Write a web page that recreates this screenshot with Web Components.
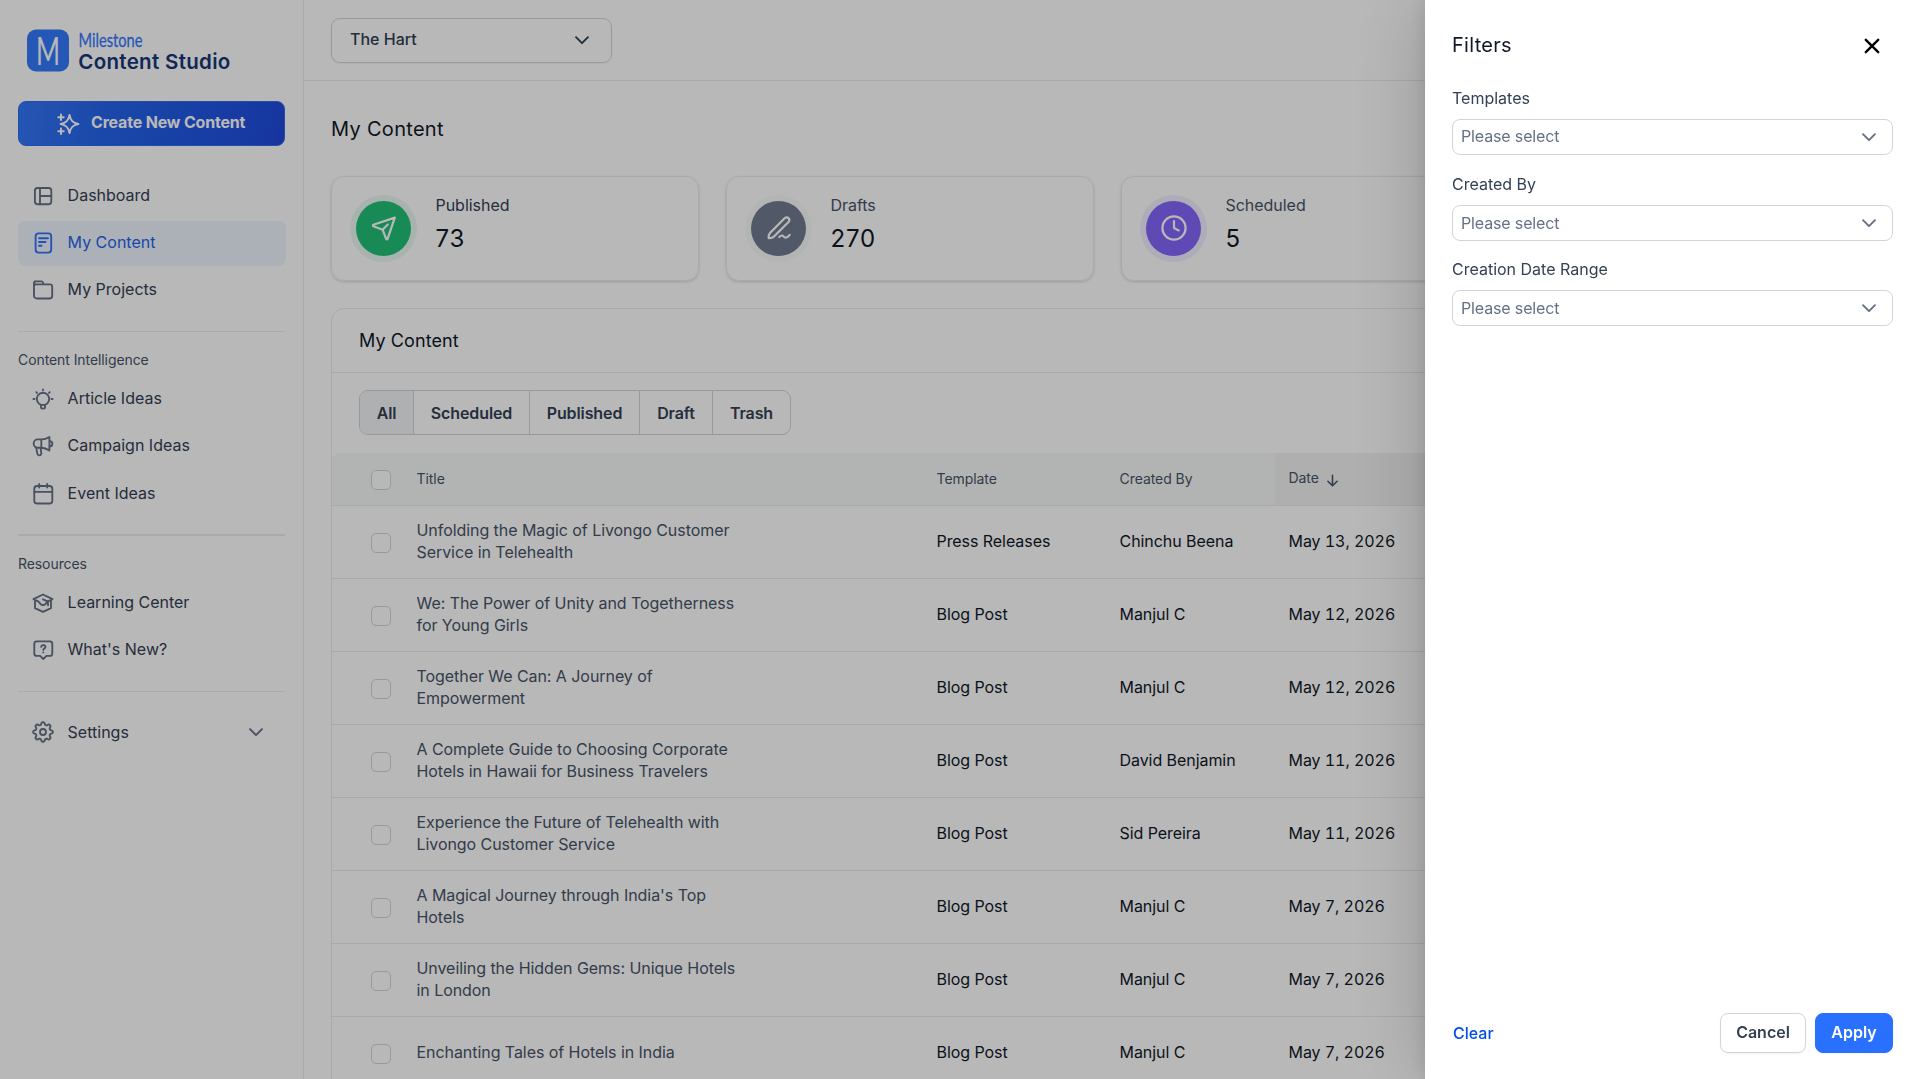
<!DOCTYPE html>
<html lang="en">
<head>
<meta charset="utf-8">
<title>Milestone Content Studio</title>
<style>
  body {
    margin: 0;
    width: 1919px;
    height: 1079px;
    overflow: hidden;
    background: #fff;
    font-family: Inter, "Liberation Sans", sans-serif;
    font-size: 16px;
    line-height: 22px;
    color: #344054;
  }
</style>
</head>
<body>
<content-studio></content-studio>

<script>
// Gear outline with eight soft teeth
function gearPath() {
  const points = [];
  for (let i = 0; i < 96; i++) {
    const a = (i / 96) * Math.PI * 2;
    const r = 8.6 + 1.2 * Math.tanh(2.2 * Math.cos(8 * a));
    points.push((12 + r * Math.cos(a)).toFixed(2) + ' ' + (12 + r * Math.sin(a)).toFixed(2));
  }
  return 'M' + points.join('L') + 'z';
}

const ICONS = {
  dashboard: '<rect x="3.9" y="4" width="16.4" height="16.2" rx="2.6"/><path d="M9 4v16.2M9 12h11.3"/>',
  content: '<rect x="4.6" y="2.4" width="15.6" height="19.2" rx="3"/><path d="M8 7.2h9M8 11h6.6M8 14.7h2.6"/>',
  folder: '<path d="M3 8.2V5a1.8 1.8 0 0 1 1.8-1.7h5.7a1.5 1.5 0 0 1 1.4 1l.8 2M3 8.2a2 2 0 0 1 2-1.9h14a2.2 2.2 0 0 1 2.2 2.2v9.2a2.8 2.8 0 0 1-2.8 2.8H5.8A2.8 2.8 0 0 1 3 17.7z"/>',
  bulb: '<path d="M10 17.8a6.2 6.2 0 1 1 4 0V20a1.6 1.6 0 0 1-1.6 1.6h-.8A1.6 1.6 0 0 1 10 20zM10 17.8h4M12 2.4v.9M2.4 12h1.1M20.5 12h1.1M5.3 5.2l.7.7M18.7 5.2l-.7.7"/>',
  megaphone: '<path d="M10.3 5.4H6.8a4.1 4.1 0 0 0 0 8.3h3.5zM10.3 5.4c3 0 5.5-.8 8.1-2.5v13.6c-2.6-1.8-5.1-2.8-8.1-2.8M18.4 6.9c4 .5 4 5.3 0 5.8M5.2 13.7l1.1 5.9a2 2 0 0 0 2 1.7c1.3 0 2.2-1 2-2.3l-.7-5.1"/>',
  calendar: '<rect x="3.3" y="4" width="18" height="17.5" rx="2.8"/><path d="M3.3 9.9h18M8.2 2v3.6M16.2 2v3.6"/>',
  learning: '<path d="M2.5 8.2 12 3.5l9.5 4.7M4 8.4v8.8l8 3.7 8-3.7V8.4M2.5 8.2l5 2.5 2.2 2.5c1.5 1 3.2 1 4.6 0l2.2-2.5 5-2.5M12 8.3l5 2.2v3.8"/>',
  question: '<path d="M5.8 3.4h13A2.5 2.5 0 0 1 21.3 5.9v9.5a2.5 2.5 0 0 1-2.5 2.5h-3.3L12.3 21l-3.2-3.1H5.8a2.5 2.5 0 0 1-2.5-2.5V5.9a2.5 2.5 0 0 1 2.5-2.5zM10.2 8.8c.2-2.3 4.2-2.2 4.2.1 0 1.5-2.1 1.6-2.1 3M12.3 14.3v.1"/>',
  gear: '<path d="' + gearPath() + '"/><circle cx="12" cy="12" r="3"/>',
  sparkles: '<path d="M12.5 3c1 5.600 3.200 8 8.900 9-5.700 1-7.900 3.400-8.900 9-1-5.600-3.200-8-8.900-9 5.700-1 7.900-3.400 8.900-9zM4 2.500v5.400M1.300 5.200h5.400M4 16.500v5.400M1.300 19.200h5.400"/>',
  send: '<path d="M22.8 1.6 1.4 8.7c-.7.3-.7 1.2 0 1.5l9.2 3.5 3.5 9.2c.3.7 1.2.7 1.5 0zM10.8 13.5l5-5"/>',
  pen: '<path d="M1.7 22.2c-.3-2.4 0-4 1.5-5.5L17.6 2.3c2.700-2.500 6.300.8 3.900 3.700L7 20.500c-1.500 1.500-3 1.900-5.300 1.700zM12.300 21c2.200-2 3.300-1.800 4.400-.4 1.300 1.600 3.700 1.300 6-1.700"/>',
  clock: '<circle cx="12" cy="12" r="11.6"/><path d="M12 5.2V12l4.7 2.4"/>',
  chevron: '<path d="M6 9.2l6 6 6-6"/>',
  close: '<path d="M5.8 5.8l12.4 12.4M18.2 5.8 5.8 18.2"/>',
  arrow: '<path d="M12 4.5v15M5.5 13l6.5 6.5 6.5-6.5"/>'
};

class StudioIcon extends HTMLElement {
  connectedCallback() {
    const size = this.getAttribute('size') || 24;
    const stroke = this.getAttribute('stroke') || 1.85;
    this.attachShadow({ mode: 'open' }).innerHTML = `
      <style>
        :host { display: block; flex: none; width: ${size}px; height: ${size}px; }
        svg { display: block; overflow: visible; }
      </style>
      <svg width="${size}" height="${size}" viewBox="0 0 24 24" fill="none" stroke="currentColor"
        stroke-width="${stroke}" stroke-linecap="round" stroke-linejoin="round">${ICONS[this.getAttribute('name')]}</svg>
    `;
  }
}

class BrandLogo extends HTMLElement {
  connectedCallback() {
    this.attachShadow({ mode: 'open' }).innerHTML = `
      <style>
        :host { display: block; height: 71px; padding-left: 27px; }
        svg { display: block; overflow: visible; }
      </style>
      <svg width="210" height="90" viewBox="0 -29 210 90">
        <rect x="0" y="0.5" width="42" height="42" rx="9" fill="#3479fe"/>
        <text x="9" y="35.5" textLength="24" lengthAdjust="spacingAndGlyphs" font-family="Lato, sans-serif" font-size="39" fill="#fff">M</text>
        <text x="51.5" y="18" textLength="64" lengthAdjust="spacingAndGlyphs" font-family="Lato, sans-serif" font-size="20" fill="#3479fe" stroke="#3479fe" stroke-width=".3">Milestone</text>
        <text x="51.3" y="40" textLength="152" font-family="Inter, sans-serif" font-size="20.5" font-weight="600" fill="#15367a">Content Studio</text>
      </svg>
    `;
  }
}

class NavItem extends HTMLElement {
  connectedCallback() {
    this.attachShadow({ mode: 'open' }).innerHTML = `
      <style>
        :host { display: flex; align-items: center; box-sizing: border-box; height: 45px; padding: 0 17px 0 13px; border-radius: 7px; color: #344054; }
        :host([active]) { background: #eff6ff; color: #2563eb; margin-right: -1px; }
        studio-icon { color: #667085; margin-right: 12.6px; position: relative; top: var(--icon-shift, 0); }
        :host([active]) studio-icon { color: #3473fa; }
        span { flex: 1; position: relative; top: var(--text-shift, -1px); }
        .more { margin-right: 0; }
      </style>
      <studio-icon name="${this.getAttribute('icon')}"></studio-icon>
      <span><slot></slot></span>
      ${this.hasAttribute('expandable') ? '<studio-icon class="more" name="chevron" stroke="1.9"></studio-icon>' : ''}
    `;
  }
}

class SideBar extends HTMLElement {
  connectedCallback() {
    this.attachShadow({ mode: 'open' }).innerHTML = `
      <style>
        :host { display: block; box-sizing: border-box; width: 304px; height: 1079px; border-right: 1px solid #eaecf0; flex: none; }
        .create { display: flex; align-items: center; box-sizing: border-box; width: 267px; height: 45px; margin: 30px 0 0 18px; padding-left: 38px; border-radius: 8px; border: 1px solid #2f6bf0; background: linear-gradient(100deg, #3577f8, #2463eb 35%, #1f4fe0 90%, #2148dc); color: #fff; font-weight: 650; }
        .create studio-icon { margin-right: 10px; }
        .create span { position: relative; top: -2px; letter-spacing: -.18px; }
        nav { display: grid; row-gap: 2px; margin: 28px 18px 0 18px; }
        .first { --text-shift: -2px; --icon-shift: -.7px; }
        .last { --icon-shift: -.5px; }
        hr { width: 267px; height: 1px; border: 0; margin: 18px 0 0 18px; background: #eaecf0; }
        h4 { margin: 18px 0 0 18px; font-size: 14px; line-height: 20px; font-weight: 400; letter-spacing: -.08px; color: #475467; }
        h4 + nav { margin-top: 6px; }
      </style>
      <brand-logo></brand-logo>
      <div class="create"><studio-icon name="sparkles" stroke="2"></studio-icon><span>Create New Content</span></div>
      <nav class="first">
        <nav-item icon="dashboard">Dashboard</nav-item>
        <nav-item icon="content" active>My Content</nav-item>
        <nav-item icon="folder">My Projects</nav-item>
      </nav>
      <hr>
      <h4>Content Intelligence</h4>
      <nav style="row-gap: 2.5px">
        <nav-item icon="bulb">Article Ideas</nav-item>
        <nav-item icon="megaphone">Campaign Ideas</nav-item>
        <nav-item icon="calendar">Event Ideas</nav-item>
      </nav>
      <hr style="height: 2px">
      <h4>Resources</h4>
      <nav>
        <nav-item icon="learning">Learning Center</nav-item>
        <nav-item icon="question">What's New?</nav-item>
      </nav>
      <hr style="margin-top: 19px">
      <nav class="last" style="margin-top: 18px">
        <nav-item icon="gear" expandable>Settings</nav-item>
      </nav>
    `;
  }
}

class TopBar extends HTMLElement {
  connectedCallback() {
    this.attachShadow({ mode: 'open' }).innerHTML = `
      <style>
        :host { display: block; box-sizing: border-box; height: 81px; padding: 18px 27px; border-bottom: 1px solid #eaecf0; }
        .picker { display: flex; align-items: center; justify-content: space-between; box-sizing: border-box; width: 281px; height: 45px; padding: 0 17px 0 18px; border: 1px solid #d0d5dd; border-radius: 9px; box-shadow: 0 1px 2px rgba(16, 24, 40, .05); font-weight: 500; }
        span { position: relative; top: -2px; }
        studio-icon { position: relative; top: -1px; }
      </style>
      <div class="picker"><span><slot></slot></span><studio-icon name="chevron" stroke="1.9"></studio-icon></div>
    `;
  }
}

class StatCard extends HTMLElement {
  connectedCallback() {
    this.attachShadow({ mode: 'open' }).innerHTML = `
      <style>
        :host { display: flex; box-sizing: border-box; width: 368px; height: 105px; padding: 24px; border: 1px solid #eaecf0; border-radius: 13px; box-shadow: 0 1px 3px rgba(16, 24, 40, .12), 0 1px 2px rgba(16, 24, 40, .05); }
        .badge { display: grid; place-items: center; width: 55px; height: 55px; border-radius: 50%; background: var(--badge); box-shadow: 0 0 0 6px var(--ring); color: #fff; margin-right: 24.5px; }
        studio-icon { margin: -1px 0 0 0; }
        .label { line-height: 20px; margin-top: -6px; letter-spacing: -.03px; color: var(--label, #475467); }
        .value { margin-top: 9px; font-size: 24px; line-height: 30px; letter-spacing: .8px; color: #101828; }
      </style>
      <div class="badge"><studio-icon name="${this.getAttribute('icon')}" stroke="2.2"></studio-icon></div>
      <div>
        <div class="label"><slot></slot></div>
        <div class="value">${this.getAttribute('value')}</div>
      </div>
    `;
  }
}

class TabGroup extends HTMLElement {
  connectedCallback() {
    const tabs = this.getAttribute('tabs').split(',');
    this.attachShadow({ mode: 'open' }).innerHTML = `
      <style>
        :host { display: flex; box-sizing: border-box; width: 432px; height: 45px; border: 1px solid #d0d5dd; border-radius: 9px; overflow: hidden; font-weight: 600; line-height: 44px; }
        div { box-sizing: border-box; text-align: center; border-right: 1px solid #d0d5dd; letter-spacing: -.1px; }
        div:first-of-type { background: #f2f4f7; }
        div:last-of-type { border-right: 0; }
      </style>
      ${tabs.map((tab, i) => `<div style="width: ${[54, 116, 110, 73, 77][i]}px">${tab}</div>`).join('')}
    `;
  }
}

class ContentTable extends HTMLElement {
  connectedCallback() {
    const rows = [
      ['Unfolding the Magic of Livongo Customer Service in Telehealth', 'Press Releases', 'Chinchu Beena', 'May 13, 2026'],
      ['We: The Power of Unity and Togetherness for Young Girls', 'Blog Post', 'Manjul C', 'May 12, 2026'],
      ['Together We Can: A Journey of Empowerment', 'Blog Post', 'Manjul C', 'May 12, 2026'],
      ['A Complete Guide to Choosing Corporate Hotels in Hawaii for Business Travelers', 'Blog Post', 'David Benjamin', 'May 11, 2026'],
      ['Experience the Future of Telehealth with Livongo Customer Service', 'Blog Post', 'Sid Pereira', 'May 11, 2026'],
      ["A Magical Journey through India's Top Hotels", 'Blog Post', 'Manjul C', 'May 7, 2026'],
      ['Unveiling the Hidden Gems: Unique Hotels in London', 'Blog Post', 'Manjul C', 'May 7, 2026'],
      ['Enchanting Tales of Hotels in India', 'Blog Post', 'Manjul C', 'May 7, 2026']
    ];
    this.attachShadow({ mode: 'open' }).innerHTML = `
      <style>
        :host { display: block; }
        .row { display: grid; grid-template-columns: 84.5px 520px 183px 155.5px 1fr; align-items: center; box-sizing: border-box; height: 73px; padding-bottom: 2px; border-bottom: 1px solid #eaecf0; color: #101828; letter-spacing: -.06px; }
        .head { height: 53px; padding-bottom: 0; background: #f7faf9; border-radius: 8px 8px 0 0; font-size: 14px; color: #475467; }
        .check { box-sizing: border-box; width: 20px; height: 20px; margin: 4px 0 0 39px; border: 1px solid #d0d5dd; border-radius: 5px; background: #fff; }
        .head .check { margin-top: 2px; }
        .title { width: 328px; color: #475467; }
        .date { padding-left: 13.5px; font-variant-numeric: tabular-nums; letter-spacing: -.05px; }
        .head .date { display: flex; align-items: center; gap: 5px; align-self: stretch; background: #f3f3f4; }
        .date span { margin-top: -3px; }
        studio-icon { margin-top: 2px; }
      </style>
      <div class="row head">
        <div class="check"></div><div>Title</div><div>Template</div><div>Created By</div>
        <div class="date"><span>Date</span><studio-icon name="arrow" size="17" stroke="2.2"></studio-icon></div>
      </div>
      ${rows.map(([title, template, author, date]) => `
        <div class="row">
          <div class="check"></div><div class="title">${title}</div><div>${template}</div><div>${author}</div><div class="date">${date}</div>
        </div>
      `).join('')}
    `;
  }
}

class ContentPanel extends HTMLElement {
  connectedCallback() {
    this.attachShadow({ mode: 'open' }).innerHTML = `
      <style>
        :host { display: block; box-sizing: border-box; height: 900px; border: 1px solid #eaecf0; border-radius: 13px; }
        h2 { margin: 0; padding: 0 27px; height: 63px; border-bottom: 1px solid #eaecf0; font-size: 18px; line-height: 63px; font-weight: 400; letter-spacing: .1px; color: #101828; }
        tab-group { margin: 17px 27px 18px; }
      </style>
      <h2><slot></slot></h2>
      <tab-group tabs="All,Scheduled,Published,Draft,Trash"></tab-group>
      <content-table></content-table>
    `;
  }
}

class FilterField extends HTMLElement {
  connectedCallback() {
    this.attachShadow({ mode: 'open' }).innerHTML = `
      <style>
        :host { display: block; }
        label { display: block; line-height: 22px; color: #344054; }
        .box { display: flex; align-items: center; justify-content: space-between; box-sizing: border-box; height: 36px; margin-top: 10px; padding: 0 11px 0 8px; border: 1px solid #d0d5dd; border-radius: 8px; color: #667085; letter-spacing: -.14px; }
        .box span { position: relative; top: var(--text-shift, 0); }
      </style>
      <label><slot></slot></label>
      <div class="box"><span>Please select</span><studio-icon name="chevron" stroke="1.9"></studio-icon></div>
    `;
  }
}

class FilterDrawer extends HTMLElement {
  connectedCallback() {
    this.attachShadow({ mode: 'open' }).innerHTML = `
      <style>
        :host { position: fixed; inset: 0; display: flex; justify-content: flex-end; background: rgba(0, 0, 0, .28); }
        section { display: flex; flex-direction: column; box-sizing: border-box; width: 494px; height: 1079px; padding: 34px 26px 26px 27px; background: #fff; box-shadow: 0 0 75px rgba(0, 0, 0, .2), -2px 0 16px rgba(0, 0, 0, .1); }
        header { display: flex; align-items: center; justify-content: space-between; height: 22px; margin-bottom: 31px; padding-right: 9px; font-size: 20px; letter-spacing: .3px; color: #101828; }
        header studio-icon { color: #000; margin-top: 2px; }
        .fields { display: grid; flex: 1; align-content: start; }
        filter-field:nth-child(1) { --text-shift: -1px; }
        filter-field:nth-child(2) { margin: 17px 0; }
        filter-field:nth-child(2)::part(box) { margin-top: 11px; }
        footer { display: flex; align-items: center; font-weight: 600; }
        .clear { flex: 1; padding-left: 1px; color: #004eeb; font-weight: 550; }
        .button { box-sizing: border-box; width: 86px; height: 40px; border: 1px solid #d0d5dd; border-radius: 8px; box-shadow: 0 1px 2px rgba(16, 24, 40, .05); text-align: center; line-height: 37px; }
        .primary { width: 78px; margin-left: 9px; border-color: #2970ff; background: #2970ff; color: #fff; }
      </style>
      <section>
        <header><span>Filters</span><studio-icon name="close" stroke="2.4"></studio-icon></header>
        <div class="fields">
          <filter-field>Templates</filter-field>
          <filter-field style="padding-top: 1px">Created By</filter-field>
          <filter-field>Creation Date Range</filter-field>
        </div>
        <footer>
          <div class="clear">Clear</div>
          <div class="button">Cancel</div>
          <div class="button primary">Apply</div>
        </footer>
      </section>
    `;
  }
}

class ContentStudio extends HTMLElement {
  connectedCallback() {
    this.attachShadow({ mode: 'open' }).innerHTML = `
      <style>
        :host { display: flex; width: 1919px; height: 1079px; overflow: hidden; }
        main { flex: 1; }
        .page { padding: 33px 27px 0; }
        h1 { margin: 0; font-size: 20px; line-height: 30px; font-weight: 400; letter-spacing: .3px; color: #101828; }
        .stats { display: grid; grid-template-columns: repeat(4, 368px); gap: 27px; margin: 32px 0 27px; }
      </style>
      <side-bar></side-bar>
      <main>
        <top-bar>The Hart</top-bar>
        <div class="page">
          <h1>My Content</h1>
          <div class="stats">
            <stat-card icon="send" value="73" style="--badge: #22bf78; --ring: #eaf8f0; --label: #344054">Published</stat-card>
            <stat-card icon="pen" value="270" style="--badge: #717b8f; --ring: #f9fbfa">Drafts</stat-card>
            <stat-card icon="clock" value="5" style="--badge: #8466fb; --ring: #f2efff">Scheduled</stat-card>
          </div>
          <content-panel>My Content</content-panel>
        </div>
      </main>
      <filter-drawer></filter-drawer>
    `;
  }
}

customElements.define('studio-icon', StudioIcon);
customElements.define('brand-logo', BrandLogo);
customElements.define('nav-item', NavItem);
customElements.define('side-bar', SideBar);
customElements.define('top-bar', TopBar);
customElements.define('stat-card', StatCard);
customElements.define('tab-group', TabGroup);
customElements.define('content-table', ContentTable);
customElements.define('content-panel', ContentPanel);
customElements.define('filter-field', FilterField);
customElements.define('filter-drawer', FilterDrawer);
customElements.define('content-studio', ContentStudio);
</script>
</body>
</html>
